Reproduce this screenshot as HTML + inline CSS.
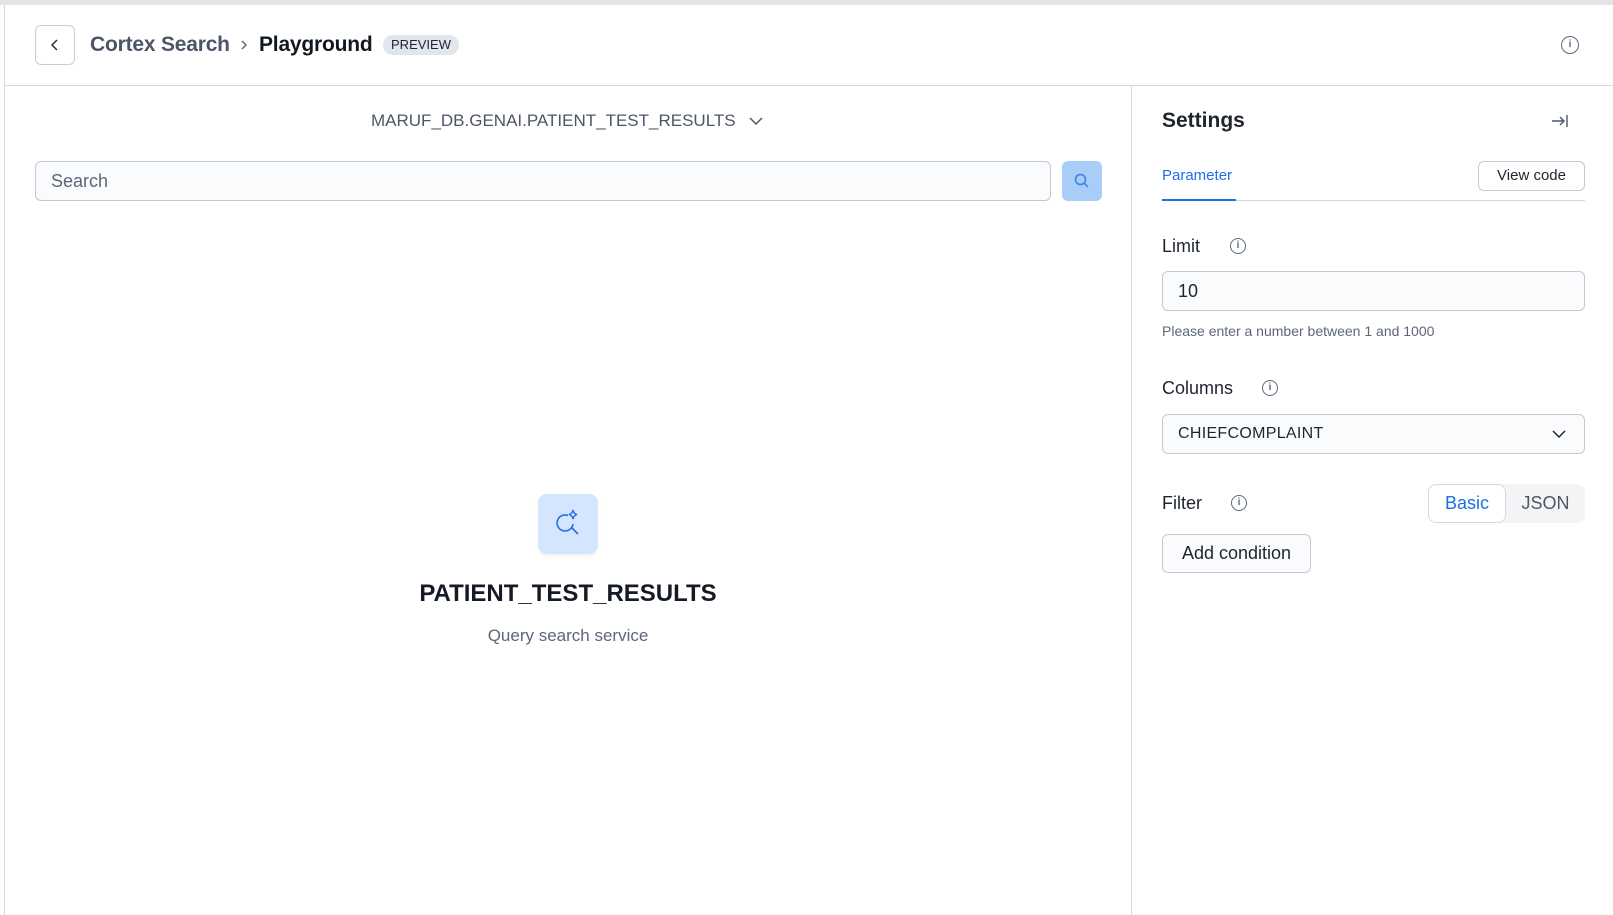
<!DOCTYPE html>
<html><head><meta charset="utf-8"><style>
*{box-sizing:border-box;margin:0;padding:0}
body{width:1613px;height:915px;background:#fff;font-family:"Liberation Sans",sans-serif;color:#1e252f;position:relative;overflow:hidden}
.a{position:absolute}
.info{position:absolute;width:16px;height:16px;border:1.4px solid #5d6a80;border-radius:50%;font-size:10px;line-height:13px;text-align:center;color:#5d6a80;font-weight:bold}
</style></head><body>
<div class="a" style="left:0;top:0;width:1613px;height:5px;background:#e3e5e8"></div>
<div class="a" style="left:4px;top:5px;width:1px;height:910px;background:#d5d8de"></div>
<div class="a" style="left:5px;top:85px;width:1608px;height:1px;background:#d5d8e2"></div>
<div class="a" style="left:1131px;top:86px;width:1px;height:829px;background:#d5d8e2"></div>

<div class="a" style="left:35px;top:25px;width:40px;height:40px;border:1px solid #c9cdd6;border-radius:6px"></div>
<svg class="a" style="left:48px;top:38px" width="14" height="14" viewBox="0 0 14 14"><path d="M9 2L4 7l5 5" fill="none" stroke="#2a313c" stroke-width="1.5"/></svg>
<div class="a" style="left:90px;top:33px;font-size:21px;color:#4d5568;font-weight:bold;letter-spacing:-0.2px">Cortex Search</div>
<svg class="a" style="left:239px;top:39px" width="10" height="12" viewBox="0 0 10 12"><path d="M3 2l4 4-4 4" fill="none" stroke="#5d6a80" stroke-width="1.5"/></svg>
<div class="a" style="left:259px;top:33px;font-size:21px;color:#121820;font-weight:bold;letter-spacing:-0.2px">Playground</div>
<div class="a" style="left:383px;top:35px;width:76px;height:20px;background:#e1e5ec;border-radius:10px;font-size:13px;line-height:20px;text-align:center;color:#1e252f">PREVIEW</div>
<div class="info" style="left:1561px;top:36px;width:18px;height:18px;line-height:15px">i</div>

<div class="a" style="left:371px;top:111px;font-size:17px;color:#4d5568">MARUF_DB.GENAI.PATIENT_TEST_RESULTS</div>
<svg class="a" style="left:748px;top:114px" width="16" height="14" viewBox="0 0 16 14"><path d="M2 4l6 6 6-6" fill="none" stroke="#4d5568" stroke-width="1.5"/></svg>
<div class="a" style="left:35px;top:161px;width:1016px;height:40px;border:1px solid #c3c8d2;border-radius:6px;background:#fafbfc;font-size:18px;line-height:38px;padding-left:15px;color:#5d6678">Search</div>
<div class="a" style="left:1062px;top:161px;width:40px;height:40px;background:#a9cdf9;border-radius:6px"></div>
<svg class="a" style="left:1073px;top:172px" width="18" height="18" viewBox="0 0 18 18"><circle cx="7.5" cy="7.5" r="5" fill="none" stroke="#3a7ee6" stroke-width="1.5"/><path d="M11 11l4 4" stroke="#3a7ee6" stroke-width="1.5"/></svg>

<div class="a" style="left:538px;top:494px;width:60px;height:60px;background:#d4e5fd;border-radius:9px;box-shadow:0 2px 4px rgba(0,0,0,0.06)"></div>
<svg class="a" style="left:548px;top:504px" width="40" height="40" viewBox="0 0 40 40"><path d="M20 11.5A8 8 0 1 0 25 20" fill="none" stroke="#1f6fe5" stroke-width="1.6"/><path d="M23 23l7 7" stroke="#1f6fe5" stroke-width="1.6"/><path d="M25 6q0.8 4 4 4.5q-3.2 0.8-4 4.5q-0.8-3.7-4-4.5q3.2-0.5 4-4.5z" fill="none" stroke="#1f6fe5" stroke-width="1.4"/></svg>
<div class="a" style="left:0;width:1136px;top:580px;text-align:center;font-size:24px;font-weight:bold;color:#151b24">PATIENT_TEST_RESULTS</div>
<div class="a" style="left:0;width:1136px;top:626px;text-align:center;font-size:17px;color:#5d6678">Query search service</div>

<div class="a" style="left:1162px;top:109px;font-size:21px;font-weight:bold;color:#1e252f">Settings</div>
<svg class="a" style="left:1550px;top:112px" width="20" height="18" viewBox="0 0 20 18"><path d="M2 9h12M10 5l4 4-4 4M17 3v12" fill="none" stroke="#4d5568" stroke-width="1.4"/></svg>
<div class="a" style="left:1162px;top:167px;font-size:15px;color:#1f6fe5">Parameter</div>
<div class="a" style="left:1162px;top:200px;width:423px;height:1px;background:#d5d8e2"></div>
<div class="a" style="left:1162px;top:199px;width:74px;height:2px;background:#1f6fe5"></div>
<div class="a" style="left:1478px;top:161px;width:107px;height:30px;border:1px solid #c3c8d2;border-radius:6px;font-size:15px;line-height:28px;text-align:center;color:#1e252f">View code</div>

<div class="a" style="left:1162px;top:236px;font-size:18px;color:#1e252f">Limit</div>
<div class="info" style="left:1230px;top:238px">i</div>
<div class="a" style="left:1162px;top:271px;width:423px;height:40px;border:1px solid #c3c8d2;border-radius:6px;background:#fafbfc;font-size:18px;line-height:38px;padding-left:15px">10</div>
<div class="a" style="left:1162px;top:323px;font-size:14px;color:#5d6678">Please enter a number between 1 and 1000</div>

<div class="a" style="left:1162px;top:378px;font-size:18px;color:#1e252f">Columns</div>
<div class="info" style="left:1262px;top:380px">i</div>
<div class="a" style="left:1162px;top:414px;width:423px;height:40px;border:1px solid #c3c8d2;border-radius:6px;background:#fafbfc;font-size:16px;line-height:38px;padding-left:15px;letter-spacing:0.3px">CHIEFCOMPLAINT</div>
<svg class="a" style="left:1551px;top:428px" width="16" height="12" viewBox="0 0 16 12"><path d="M2 3l6 6 6-6" fill="none" stroke="#1e252f" stroke-width="1.5"/></svg>

<div class="a" style="left:1162px;top:493px;font-size:18px;color:#1e252f">Filter</div>
<div class="info" style="left:1231px;top:495px">i</div>
<div class="a" style="left:1428px;top:484px;width:157px;height:39px;background:#f3f4f6;border-radius:8px"></div>
<div class="a" style="left:1428px;top:484px;width:78px;height:39px;background:#fff;border:1px solid #d5d8e2;border-radius:8px;font-size:18px;line-height:37px;text-align:center;color:#1f6fe5">Basic</div>
<div class="a" style="left:1506px;top:484px;width:79px;height:39px;font-size:18px;line-height:39px;text-align:center;color:#4d5568">JSON</div>
<div class="a" style="left:1162px;top:534px;width:149px;height:39px;border:1px solid #c3c8d2;border-radius:6px;background:#fafbfc;font-size:18px;line-height:37px;text-align:center">Add condition</div>
</body></html>
